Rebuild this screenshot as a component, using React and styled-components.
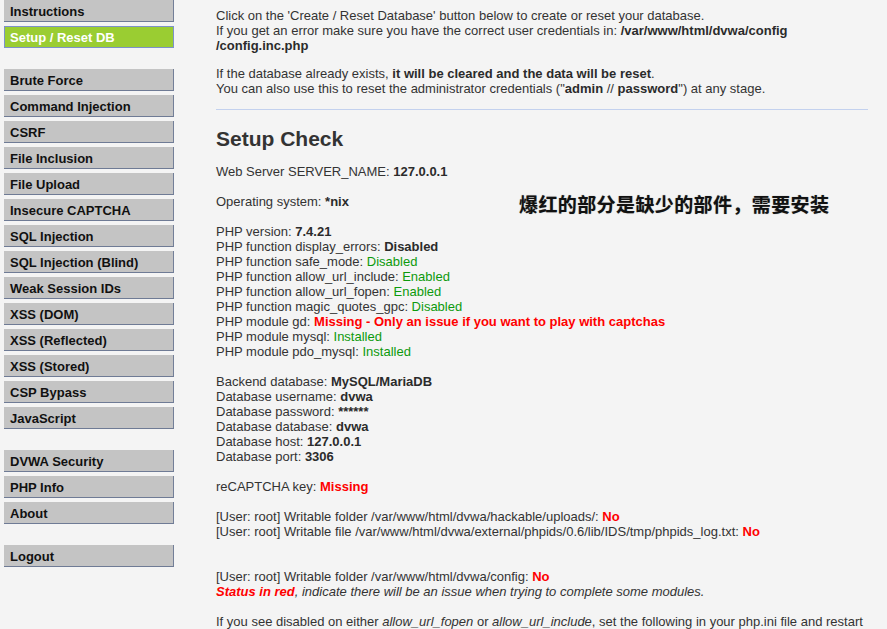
import React from "react";
import styled, { createGlobalStyle, css } from "styled-components";

const Global = createGlobalStyle`
  html, body {
    margin: 0;
    padding: 0;
    background: #f4f4f4;
  }
  body {
    font-family: "Liberation Sans", Arial, sans-serif;
    font-size: 13px;
    color: #333;
  }
`;

const Page = styled.div`
  display: grid;
  grid-template-columns: 216px 652px;
  align-items: start;
  min-height: 629px;
`;

const Sidebar = styled.nav`
  display: flex;
  flex-direction: column;
  gap: 21px;
  padding-left: 4px;
`;

const MenuGroup = styled.ul`
  list-style: none;
  margin: 0;
  padding: 0;
  display: flex;
  flex-direction: column;
  gap: 4px;
  width: 170px;
`;

const MenuItem = styled.li`
  box-sizing: border-box;
  height: 22px;
  display: flex;
  align-items: center;
  padding: 2px 0 0 6px;
  font-weight: bold;
  font-size: 13px;
  color: #111;
  background: #c4c4c4;
  border-right: 1px solid #737f98;
  border-bottom: 1px solid #6f7b95;
  ${(p) =>
    p.$selected &&
    css`
      padding: 1px 0 0 5px;
      color: #fff;
      background: #9acd32;
      border: 1px solid #7d92c9;
    `}
`;

const Main = styled.main`
  position: relative;
  padding-top: 8px;
  line-height: 15px;
`;

const Para = styled.p`
  margin: 0 0 13px;
`;

const Rule = styled.hr`
  margin: 0;
  border: 0;
  height: 1px;
  background: #c3d1ee;
`;

const Heading = styled.h2`
  margin: 17px 0 13px;
  font-size: 21px;
  line-height: 24px;
  font-weight: bold;
  color: #333;
`;

const Block = styled.div`
  line-height: 15px;
`;

const B = styled.b`
  font-weight: bold;
  color: #2b2b2b;
`;

const Ok = styled.span`
  color: #0d9a0d;
`;

const Bad = styled.span`
  color: #ff0000;
  font-weight: bold;
`;

const Note = styled.div`
  position: absolute;
  left: 303px;
  top: 192px;
  font-family: "Noto Sans CJK SC", "Noto Sans", sans-serif;
  font-weight: bold;
  font-size: 19px;
  letter-spacing: 0.4px;
  line-height: 24px;
  color: #111;
  text-shadow: 0 0 1px rgba(0, 0, 0, 0.45);
  white-space: nowrap;
`;

const groups = [
  [{ label: "Instructions" }, { label: "Setup / Reset DB", selected: true }],
  [
    { label: "Brute Force" },
    { label: "Command Injection" },
    { label: "CSRF" },
    { label: "File Inclusion" },
    { label: "File Upload" },
    { label: "Insecure CAPTCHA" },
    { label: "SQL Injection" },
    { label: "SQL Injection (Blind)" },
    { label: "Weak Session IDs" },
    { label: "XSS (DOM)" },
    { label: "XSS (Reflected)" },
    { label: "XSS (Stored)" },
    { label: "CSP Bypass" },
    { label: "JavaScript" },
  ],
  [{ label: "DVWA Security" }, { label: "PHP Info" }, { label: "About" }],
  [{ label: "Logout" }],
];

export default function App() {
  return (
    <>
      <Global />
      <Page>
        <Sidebar>
          {groups.map((g, i) => (
            <MenuGroup key={i}>
              {g.map((it) => (
                <MenuItem key={it.label} $selected={it.selected}>
                  {it.label}
                </MenuItem>
              ))}
            </MenuGroup>
          ))}
        </Sidebar>
        <Main>
          <Para>
            Click on the 'Create / Reset Database' button below to create or reset your database.
            <br />
            If you get an error make sure you have the correct user credentials in:{" "}
            <B>
              /var/www/html/dvwa/config
              <br />
              /config.inc.php
            </B>
          </Para>
          <Para>
            If the database already exists, <B>it will be cleared and the data will be reset</B>.
            <br />
            You can also use this to reset the administrator credentials ("<B>admin</B> // <B>password</B>") at any
            stage.
          </Para>
          <Rule />
          <Heading>Setup Check</Heading>
          <Block>
            Web Server SERVER_NAME: <B>127.0.0.1</B>
            <br />
            <br />
            Operating system: <B>*nix</B>
            <br />
            <br />
            PHP version: <B>7.4.21</B>
            <br />
            PHP function display_errors: <B>Disabled</B>
            <br />
            PHP function safe_mode: <Ok>Disabled</Ok>
            <br />
            PHP function allow_url_include: <Ok>Enabled</Ok>
            <br />
            PHP function allow_url_fopen: <Ok>Enabled</Ok>
            <br />
            PHP function magic_quotes_gpc: <Ok>Disabled</Ok>
            <br />
            PHP module gd: <Bad>Missing - Only an issue if you want to play with captchas</Bad>
            <br />
            PHP module mysql: <Ok>Installed</Ok>
            <br />
            PHP module pdo_mysql: <Ok>Installed</Ok>
            <br />
            <br />
            Backend database: <B>MySQL/MariaDB</B>
            <br />
            Database username: <B>dvwa</B>
            <br />
            Database password: <B>******</B>
            <br />
            Database database: <B>dvwa</B>
            <br />
            Database host: <B>127.0.0.1</B>
            <br />
            Database port: <B>3306</B>
            <br />
            <br />
            reCAPTCHA key: <Bad>Missing</Bad>
            <br />
            <br />
            [User: root] Writable folder /var/www/html/dvwa/hackable/uploads/: <Bad>No</Bad>
            <br />
            [User: root] Writable file /var/www/html/dvwa/external/phpids/0.6/lib/IDS/tmp/phpids_log.txt:{" "}
            <Bad>No</Bad>
            <br />
            <br />
            <br />
            [User: root] Writable folder /var/www/html/dvwa/config: <Bad>No</Bad>
            <br />
            <i>
              <Bad>Status in red</Bad>, indicate there will be an issue when trying to complete some modules.
            </i>
            <br />
            <br />
            If you see disabled on either <i>allow_url_fopen</i> or <i>allow_url_include</i>, set the following in
            your php.ini file and restart Apache.
          </Block>
          <Note>爆红的部分是缺少的部件，需要安装</Note>
        </Main>
      </Page>
    </>
  );
}
